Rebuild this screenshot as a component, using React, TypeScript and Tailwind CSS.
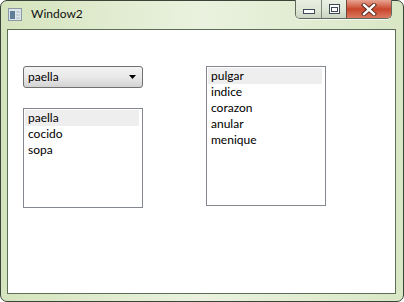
import { useState } from "react";

const foods = ["paella", "cocido", "sopa"];
const fingers = ["pulgar", "indice", "corazon", "anular", "menique"];

function WindowIcon() {
  return (
    <svg width="14" height="13" viewBox="0 0 14 13">
      <rect x="0.5" y="0.5" width="13" height="12" fill="#dfe6ea" stroke="#8a99a6" />
      <rect x="2" y="3" width="5" height="8" fill="#5f7f99" />
      <rect x="8" y="3" width="4" height="2" fill="#c4d0d8" />
      <rect x="8" y="6" width="4" height="2" fill="#c4d0d8" />
      <rect x="8" y="9" width="4" height="2" fill="#c4d0d8" />
    </svg>
  );
}

function CaptionButtons() {
  return (
    <div className="flex h-[19px] mt-[-1px] rounded-b-[5px] border border-[#5e6a60] border-t-0 overflow-hidden shadow-[0_1px_0_rgba(255,255,255,0.7)]">
      <div className="w-[26px] flex items-center justify-center border-r border-[#7b877b] bg-gradient-to-b from-[#e9efe2] via-[#dfe7d7] to-[#c9d4c1]">
        <svg width="12" height="6" viewBox="0 0 12 6" className="mt-[5px]">
          <rect x="0.5" y="0.5" width="11" height="4" fill="#fff" stroke="#3d4a56" />
        </svg>
      </div>
      <div className="w-[25px] flex items-center justify-center border-r border-[#6b4a40] bg-gradient-to-b from-[#e9efe2] via-[#dfe7d7] to-[#c9d4c1]">
        <svg width="11" height="10" viewBox="0 0 11 10">
          <rect x="0.5" y="0.5" width="10" height="9" fill="#fff" stroke="#3d4a56" />
          <rect x="2.5" y="3.5" width="6" height="4" fill="#fff" stroke="#3d4a56" />
        </svg>
      </div>
      <div className="w-[44px] flex items-center justify-center bg-gradient-to-b from-[#e7a493] via-[#c8452a] to-[#d9785f]">
        <svg width="16" height="13" viewBox="0 0 16 13">
          <path d="M3 2 L13 11 M13 2 L3 11" stroke="#4a2218" strokeWidth="4.2" strokeLinecap="square" />
          <path d="M3 2 L13 11 M13 2 L3 11" stroke="#ffffff" strokeWidth="2.4" strokeLinecap="square" />
        </svg>
      </div>
    </div>
  );
}

function ListBox({ items, h }: { items: string[]; h: string }) {
  const [sel, setSel] = useState(0);
  return (
    <div className={`w-[120px] ${h} border border-[#828790] bg-white p-px`}>
      {items.map((it, i) => (
        <div
          key={it}
          onClick={() => setSel(i)}
          className={`h-[16px] leading-[16px] pl-[3px] mr-[2px] ${i === sel ? "bg-[#eeeeee]" : ""}`}
        >
          {it}
        </div>
      ))}
    </div>
  );
}

export default function App() {
  return (
    <div className="w-[404px] h-[302px] bg-white font-['Segoe_UI',Lato,sans-serif] text-[12px] text-black">
      <div className="w-full h-full rounded-[7px] border border-[#3a4438] bg-gradient-to-r from-[#d5e4bd] via-[#eaf2df] to-[#d9e7c5] flex flex-col">
        {/* Title bar */}
        <div className="h-[28px] flex items-start shrink-0">
          <div className="mt-[7px] ml-[7px]">
            <WindowIcon />
          </div>
          <span className="ml-[9px] mt-[5px] text-[12px] leading-[16px] text-[#111]">Window2</span>
          <div className="ml-auto mr-[11px]">
            <CaptionButtons />
          </div>
        </div>

        {/* Client area */}
        <div className="flex-1 ml-[6px] mr-[7px] mb-[7px] border border-[#5d6e57] bg-white flex gap-[63px] pl-[15px] pt-[36px]">
          <div className="flex flex-col gap-[20px]">
            <div className="w-[120px] h-[22px] rounded-[3px] border border-[#707070] bg-gradient-to-b from-[#f3f3f3] via-[#e9e9e9] to-[#d3d3d3] flex items-center pl-[4px] pr-[6px]">
              <span className="leading-[16px]">paella</span>
              <svg width="7" height="4" viewBox="0 0 7 4" className="ml-auto">
                <path d="M0 0 L7 0 L3.5 4 Z" fill="#000" />
              </svg>
            </div>
            <ListBox items={foods} h="h-[100px]" />
          </div>
          <ListBox items={fingers} h="h-[140px]" />
        </div>
      </div>
    </div>
  );
}
